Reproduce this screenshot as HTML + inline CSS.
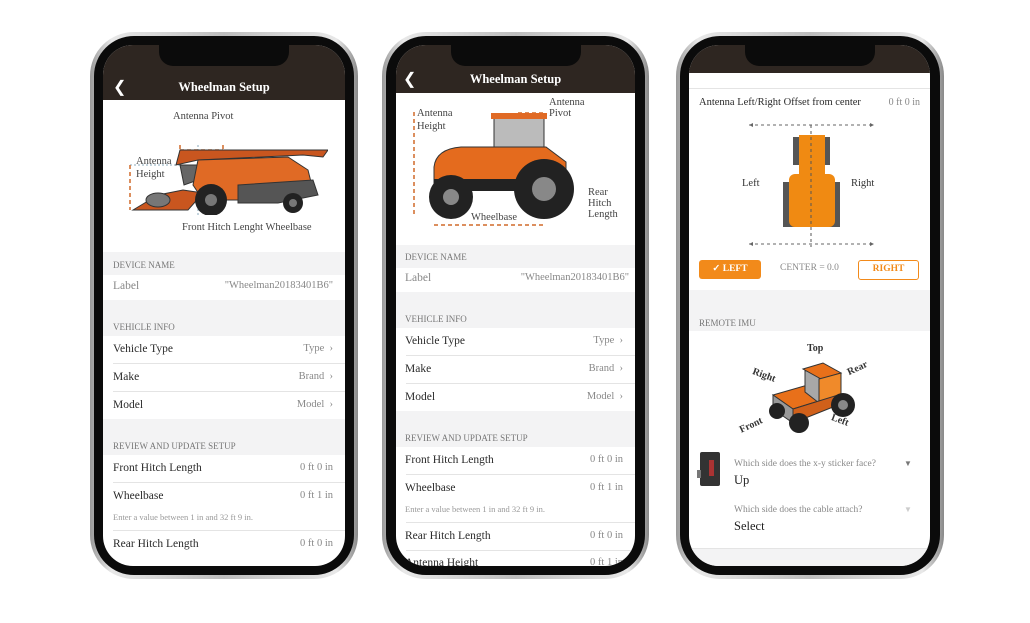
<!DOCTYPE html><html><head><meta charset="utf-8"><style>
*{margin:0;padding:0;box-sizing:border-box}
body{width:1030px;height:623px;background:#fff;position:relative;overflow:hidden;font-family:"Liberation Serif",serif;color:#333}
.ph{position:absolute;border-radius:44px;background:linear-gradient(90deg,#9a9a9a,#e8e8e8 8%,#bdbdbd 50%,#e8e8e8 92%,#8a8a8a);}
.bz{position:absolute;left:4px;top:4px;right:4px;bottom:4px;border-radius:40px;background:#0b0b0b}
.sc{position:absolute;border-radius:30px;overflow:hidden;background:#fff}
.a{position:absolute;white-space:nowrap}
.hd{position:absolute;left:0;top:0;width:100%;background:#2e2621}
.notch{position:absolute;top:0;left:50%;margin-left:-65px;width:130px;height:21px;background:#0b0b0b;border-radius:0 0 14px 14px}
.tt{color:#fff;font-weight:bold;font-size:12.5px;text-align:center;width:100%}
.g{position:absolute;left:0;width:100%;background:#f3f3f4}
.sh{font-size:9px;color:#777}
.r{font-size:11.5px;color:#2a2a2a}
.v{font-size:10.5px;color:#888;right:12px}
.ln{position:absolute;left:10px;right:0;height:1px;background:#e4e4e4}
.btn{position:absolute;font-size:9.5px;font-weight:bold;text-align:center;border-radius:3px}
</style></head><body>

<!-- phone 1 -->
<div class="ph" style="left:90px;top:32px;width:268px;height:547px"><div class="bz"></div></div>
<div class="sc" style="left:103px;top:45px;width:242px;height:521px">
 <div class="hd" style="height:55px"></div><div class="notch"></div>
 <div class="a" style="left:10px;top:32px;color:#fff;font-size:16px">&#10094;</div>
 <div class="a tt" style="top:35px">Wheelman Setup</div>
 <div class="a" style="left:70px;top:66px;font-size:10.5px;color:#444">Antenna Pivot</div>
 <div class="a" style="left:33px;top:110px;font-size:10.5px;color:#444;line-height:13px">Antenna<br>Height</div>
 <div class="a" style="left:79px;top:177px;font-size:10.5px;color:#444">Front Hitch Lenght Wheelbase</div>
 <svg class="a" style="left:25px;top:80px" width="200" height="90" viewBox="0 0 200 90">
  <path d="M2 40 H70 M70 20 V90" stroke="#8ab" stroke-dasharray="2 2" fill="none"/>
  <path d="M2 40 V85 M52 25 H95 M52 20 V30 M95 20 V30 M52 92 H95" stroke="#d06a2a" stroke-width="1.5" stroke-dasharray="4 3" fill="none"/>
  <path d="M48 40 L52 25 L200 25 L195 32 L175 30 L70 35 Z" fill="#c9561f" stroke="#333" stroke-width="1"/>
  <path d="M52 40 H70 V55 L56 60 Z" fill="#666" stroke="#333"/>
  <path d="M70 35 L160 32 L180 45 L185 65 L150 70 L110 75 L75 75 L65 60 Z" fill="#e06a25" stroke="#333"/>
  <path d="M110 60 L185 55 L190 70 L150 78 L110 78 Z" fill="#555" stroke="#333"/>
  <path d="M5 85 L30 70 L55 65 L75 68 L60 85 Z" fill="#c9561f" stroke="#333"/>
  <ellipse cx="30" cy="75" rx="12" ry="7" fill="#777" stroke="#333"/>
  <circle cx="83" cy="75" r="16" fill="#222"/><circle cx="83" cy="75" r="6" fill="#777"/>
  <circle cx="165" cy="78" r="10" fill="#222"/><circle cx="165" cy="78" r="4" fill="#777"/>
 </svg>
 <div class="g" style="top:207px;height:23px"></div><div class="a sh" style="left:10px;top:215px">DEVICE NAME</div>
 <div class="a r" style="left:10px;top:235px;color:#888">Label</div><div class="a v" style="top:235px">"Wheelman20183401B6"</div>
 <div class="g" style="top:255px;height:36px"></div><div class="a sh" style="left:10px;top:277px">VEHICLE INFO</div>
 <div class="a r" style="left:10px;top:298px">Vehicle Type</div><div class="a v" style="top:298px">Type &nbsp;&#8250;</div>
 <div class="ln" style="top:318px"></div>
 <div class="a r" style="left:10px;top:326px">Make</div><div class="a v" style="top:326px">Brand &nbsp;&#8250;</div>
 <div class="ln" style="top:346px"></div>
 <div class="a r" style="left:10px;top:354px">Model</div><div class="a v" style="top:354px">Model &nbsp;&#8250;</div>
 <div class="g" style="top:374px;height:36px"></div><div class="a sh" style="left:10px;top:396px">REVIEW AND UPDATE SETUP</div>
 <div class="a r" style="left:10px;top:417px">Front Hitch Length</div><div class="a v" style="top:417px">0 ft 0 in</div>
 <div class="ln" style="top:437px"></div>
 <div class="a r" style="left:10px;top:445px">Wheelbase</div><div class="a v" style="top:445px">0 ft 1 in</div>
 <div class="a" style="left:10px;top:467px;font-size:8.5px;color:#999">Enter a value between 1 in and 32 ft 9 in.</div>
 <div class="ln" style="top:485px"></div>
 <div class="a r" style="left:10px;top:493px">Rear Hitch Length</div><div class="a v" style="top:493px">0 ft 0 in</div>
</div>

<!-- phone 2 -->
<div class="ph" style="left:382px;top:32px;width:267px;height:547px"><div class="bz"></div></div>
<div class="sc" style="left:396px;top:45px;width:239px;height:521px">
 <div class="hd" style="height:48px"></div><div class="notch"></div>
 <div class="a" style="left:7px;top:24px;color:#fff;font-size:16px">&#10094;</div>
 <div class="a tt" style="top:27px">Wheelman Setup</div>
 <div class="a" style="left:21px;top:62px;font-size:10.5px;color:#444;line-height:13px">Antenna<br>Height</div>
 <div class="a" style="left:153px;top:52px;font-size:10.5px;color:#444;line-height:11px">Antenna<br>Pivot</div>
 <div class="a" style="left:192px;top:142px;font-size:10.5px;color:#444;line-height:11px">Rear<br>Hitch<br>Length</div>
 <div class="a" style="left:75px;top:167px;font-size:10.5px;color:#444">Wheelbase</div>
 <svg class="a" style="left:10px;top:62px" width="190" height="125" viewBox="0 0 190 125">
  <path d="M8 5 V108 M28 118 H138 M112 6 H140" stroke="#d06a2a" stroke-width="1.5" stroke-dasharray="4 3" fill="none"/>
  <rect x="88" y="10" width="50" height="40" fill="#bbb" stroke="#333"/>
  <rect x="85" y="6" width="56" height="6" fill="#e06a25"/>
  <path d="M28 60 Q30 42 55 40 L140 40 L160 55 L160 80 L28 80 Z" fill="#e46b1e" stroke="#333"/>
  <rect x="28" y="72" width="132" height="12" fill="#222"/>
  <circle cx="45" cy="90" r="22" fill="#222"/><circle cx="45" cy="90" r="8" fill="#888"/>
  <circle cx="138" cy="82" r="30" fill="#222"/><circle cx="138" cy="82" r="12" fill="#888"/>
 </svg>
 <div class="g" style="top:200px;height:23px"></div><div class="a sh" style="left:9px;top:207px">DEVICE NAME</div>
 <div class="a r" style="left:9px;top:227px;color:#888">Label</div><div class="a v" style="top:227px;right:6px">"Wheelman20183401B6"</div>
 <div class="g" style="top:247px;height:36px"></div><div class="a sh" style="left:9px;top:269px">VEHICLE INFO</div>
 <div class="a r" style="left:9px;top:290px">Vehicle Type</div><div class="a v" style="top:290px">Type &nbsp;&#8250;</div>
 <div class="ln" style="top:310px"></div>
 <div class="a r" style="left:9px;top:318px">Make</div><div class="a v" style="top:318px">Brand &nbsp;&#8250;</div>
 <div class="ln" style="top:338px"></div>
 <div class="a r" style="left:9px;top:346px">Model</div><div class="a v" style="top:346px">Model &nbsp;&#8250;</div>
 <div class="g" style="top:366px;height:36px"></div><div class="a sh" style="left:9px;top:388px">REVIEW AND UPDATE SETUP</div>
 <div class="a r" style="left:9px;top:409px">Front Hitch Length</div><div class="a v" style="top:409px">0 ft 0 in</div>
 <div class="ln" style="top:429px"></div>
 <div class="a r" style="left:9px;top:437px">Wheelbase</div><div class="a v" style="top:437px">0 ft 1 in</div>
 <div class="a" style="left:9px;top:459px;font-size:8.5px;color:#999">Enter a value between 1 in and 32 ft 9 in.</div>
 <div class="ln" style="top:477px"></div>
 <div class="a r" style="left:9px;top:485px">Rear Hitch Length</div><div class="a v" style="top:485px">0 ft 0 in</div>
 <div class="ln" style="top:505px"></div>
 <div class="a r" style="left:9px;top:512px">Antenna Height</div><div class="a v" style="top:512px">0 ft 1 in</div>
</div>

<!-- phone 3 -->
<div class="ph" style="left:676px;top:32px;width:268px;height:547px"><div class="bz"></div></div>
<div class="sc" style="left:689px;top:45px;width:241px;height:521px">
 <div class="hd" style="height:28px"></div><div class="notch"></div>
 <div class="ln" style="top:43px;left:0"></div>
 <div class="a r" style="left:10px;top:52px;font-size:10.5px">Antenna Left/Right Offset from center</div>
 <div class="a v" style="top:52px;right:10px;font-size:10px">0 ft 0 in</div>
 <svg class="a" style="left:55px;top:72px" width="135" height="130" viewBox="0 0 135 130">
  <path d="M5 8 H130 M5 127 H130" stroke="#666" stroke-dasharray="3 3" fill="none"/>
  <path d="M5 8 l4 -2 v4z M130 8 l-4 -2 v4z M5 127 l4 -2 v4z M130 127 l-4 -2 v4z" fill="#666"/>
  <rect x="49" y="20" width="10" height="28" fill="#555"/><rect x="76" y="20" width="10" height="28" fill="#555"/>
  <rect x="39" y="65" width="14" height="45" fill="#555"/><rect x="82" y="65" width="14" height="45" fill="#555"/>
  <rect x="55" y="18" width="26" height="45" fill="#f08a12"/>
  <rect x="45" y="57" width="46" height="53" rx="6" fill="#f08a12"/>
  <path d="M67 8 V130" stroke="#555" stroke-dasharray="3 3"/>
 </svg>
 <div class="a" style="left:53px;top:133px;font-size:10.5px">Left</div>
 <div class="a" style="left:162px;top:133px;font-size:10.5px">Right</div>
 <div class="btn" style="left:10px;top:215px;width:62px;height:19px;background:#f28a1a;color:#fff;line-height:19px">&#10003; LEFT</div>
 <div class="a" style="left:91px;top:218px;font-size:9.5px;color:#888">CENTER = 0.0</div>
 <div class="btn" style="left:169px;top:215px;width:61px;height:20px;border:1.5px solid #f28a1a;color:#f28a1a;line-height:17px">RIGHT</div>
 <div class="g" style="top:245px;height:41px"></div><div class="a sh" style="left:10px;top:273px">REMOTE IMU</div>
 <div class="a" style="left:118px;top:298px;font-size:10px;font-weight:bold">Top</div>
 <div class="a" style="left:63px;top:325px;font-size:10px;font-weight:bold;transform:rotate(20deg)">Right</div>
 <div class="a" style="left:158px;top:318px;font-size:10px;font-weight:bold;transform:rotate(-25deg)">Rear</div>
 <div class="a" style="left:50px;top:375px;font-size:10px;font-weight:bold;transform:rotate(-25deg)">Front</div>
 <div class="a" style="left:142px;top:370px;font-size:10px;font-weight:bold;transform:rotate(20deg)">Left</div>
 <svg class="a" style="left:74px;top:312px" width="95" height="80" viewBox="0 0 95 80">
  <path d="M10 38 L55 25 L75 38 L30 52 Z" fill="#e8701a" stroke="#333"/>
  <path d="M42 14 L62 8 L76 18 L76 40 L56 46 L42 35 Z" fill="#a8a8a8" stroke="#333"/>
  <path d="M40 12 L60 6 L78 16 L58 22 Z" fill="#e8701a" stroke="#333"/>
  <path d="M56 22 L78 16 L78 40 L56 46 Z" fill="#f08a2a" stroke="#333"/>
  <path d="M10 38 L30 52 L30 66 L10 52 Z" fill="#999" stroke="#333"/>
  <path d="M30 52 L75 38 L75 48 L30 66 Z" fill="#d0601a" stroke="#333"/>
  <circle cx="14" cy="54" r="8" fill="#222"/><circle cx="36" cy="66" r="10" fill="#222"/>
  <circle cx="80" cy="48" r="12" fill="#222"/><circle cx="80" cy="48" r="5" fill="#888"/>
 </svg>
 <svg class="a" style="left:8px;top:405px" width="26" height="38" viewBox="0 0 26 38"><rect x="3" y="2" width="20" height="34" rx="2" fill="#333"/><rect x="12" y="10" width="5" height="16" fill="#a33"/><rect x="0" y="20" width="4" height="8" fill="#777"/></svg>
 <div class="a" style="left:45px;top:414px;font-size:9.5px;color:#888">Which side does the x-y sticker face?</div>
 <div class="a" style="left:215px;top:414px;font-size:8px;color:#777">&#9660;</div>
 <div class="a" style="left:45px;top:428px;font-size:12.5px;color:#222">Up</div>
 <div class="a" style="left:45px;top:460px;font-size:9.5px;color:#888">Which side does the cable attach?</div>
 <div class="a" style="left:215px;top:460px;font-size:8px;color:#ccc">&#9660;</div>
 <div class="a" style="left:45px;top:474px;font-size:12.5px;color:#222">Select</div>
 <div class="g" style="top:503px;height:20px;border-top:1px solid #e4e4e4"></div>
</div>
</body></html>
